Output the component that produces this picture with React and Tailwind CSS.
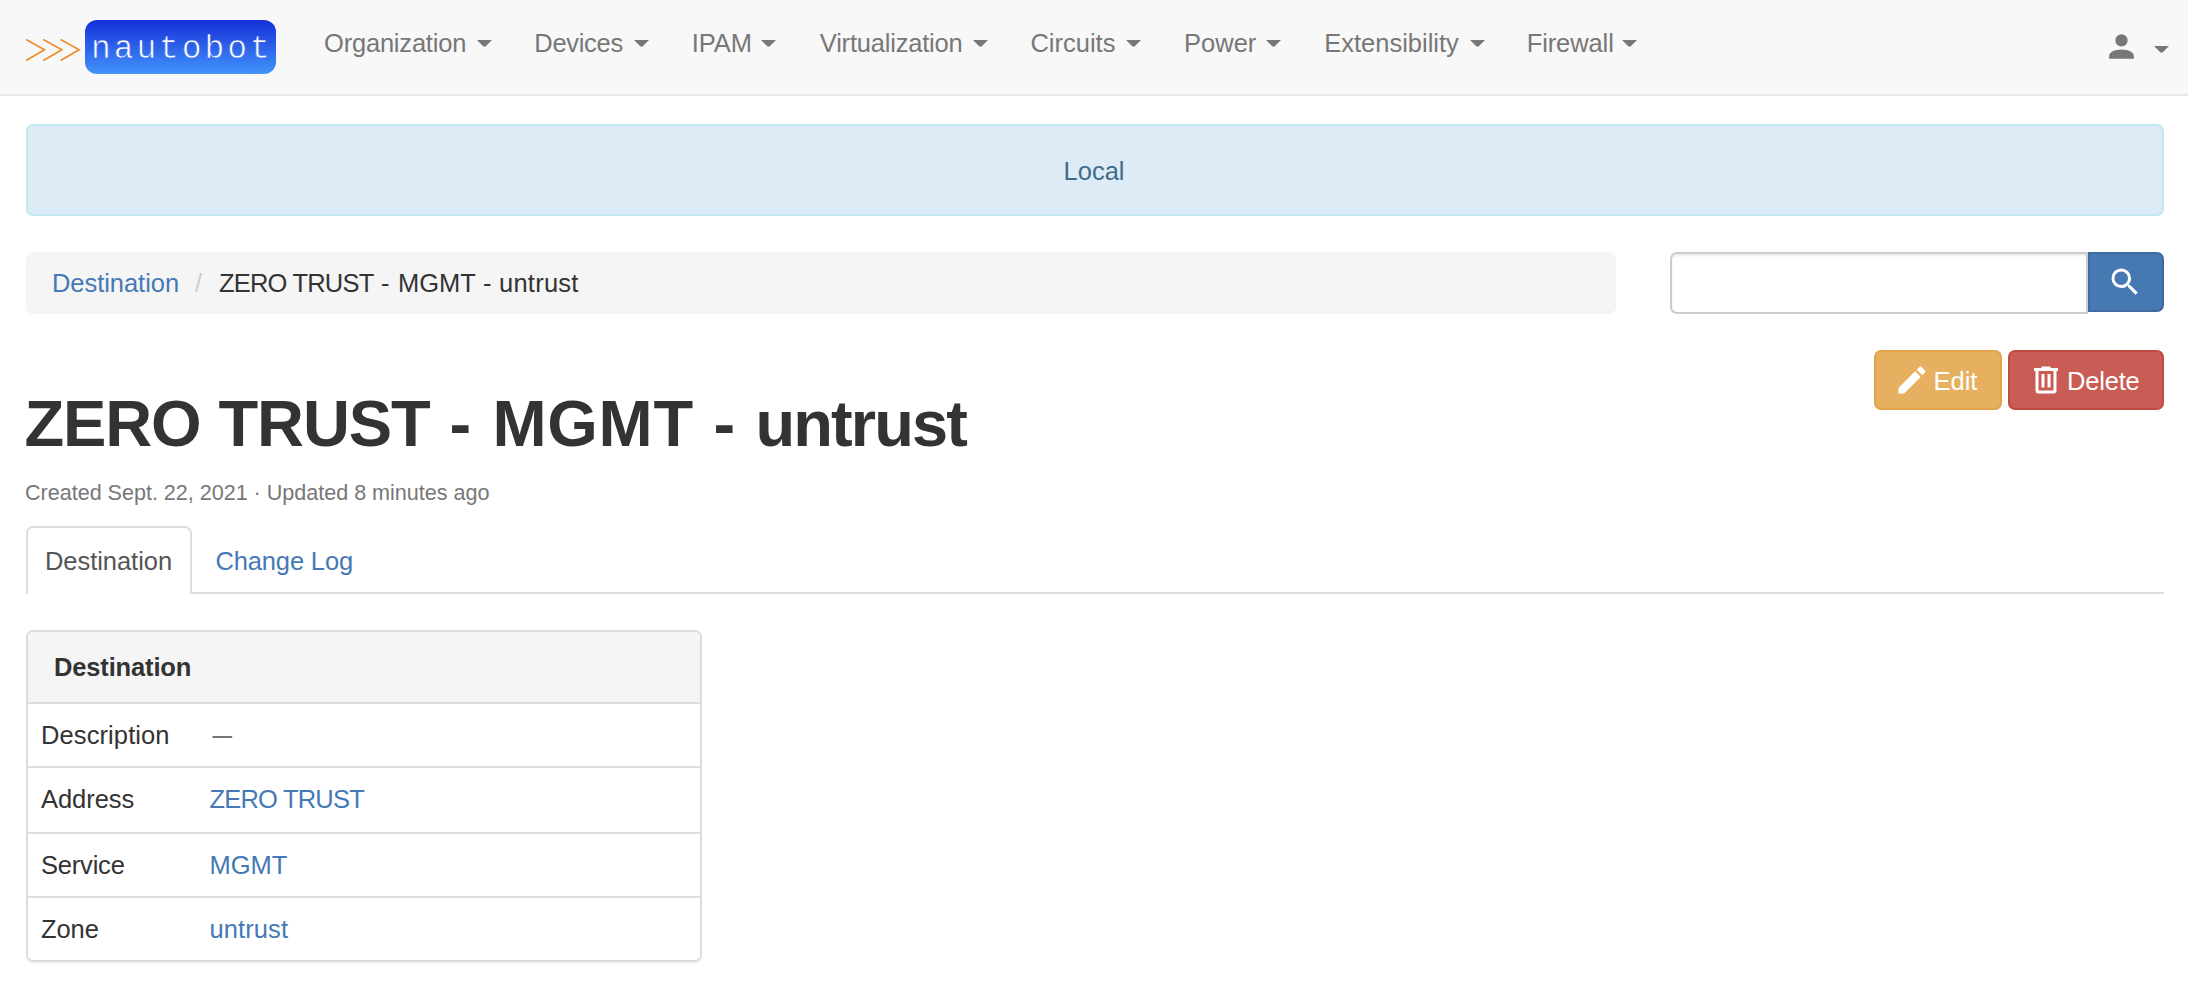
const NAV = [
  { label: 'Organization', width: 'w-[210.3px]', text: 'w-[152.7px] tracking-[-0.2px]' },
  { label: 'Devices', width: 'w-[157.5px]', text: 'w-[99.5px] tracking-[-0.3px]' },
  { label: 'IPAM', width: 'w-[128px]', text: 'w-[69.5px] tracking-[-0.1px]' },
  { label: 'Virtualization', width: 'w-[210.6px]', text: 'w-[153.7px] tracking-[-0.2px]' },
  { label: 'Circuits', width: 'w-[153.7px]', text: 'w-[95.6px] tracking-[0px]' },
  { label: 'Power', width: 'w-[140.1px]', text: 'w-[82px] tracking-[0px]' },
  { label: 'Extensibility', width: 'w-[202.5px]', text: 'w-[146px] tracking-[0px]' },
  { label: 'Firewall', width: 'w-[120px]', text: 'w-[95.6px] tracking-[-0.1px]' },
];

const ICONS = {
  account:
    'M12,4A4,4 0 0,1 16,8A4,4 0 0,1 12,12A4,4 0 0,1 8,8A4,4 0 0,1 12,4M12,14C16.42,14 20,15.79 20,18V20H4V18C4,15.79 7.58,14 12,14Z',
  magnify:
    'M9.5,3A6.5,6.5 0 0,1 16,9.5C16,11.11 15.41,12.59 14.44,13.73L14.71,14H15.5L20.5,19L19,20.5L14,15.5V14.71L13.73,14.44C12.59,15.41 11.11,16 9.5,16A6.5,6.5 0 0,1 3,9.5A6.5,6.5 0 0,1 9.5,3M9.5,5C7,5 5,7 5,9.5C5,12 7,14 9.5,14C12,14 14,12 14,9.5C14,7 12,5 9.5,5Z',
  pencil:
    'M20.71,7.04C21.1,6.65 21.1,6 20.71,5.63L18.37,3.29C18,2.9 17.35,2.9 16.96,3.29L15.12,5.12L18.87,8.87M3,17.25V21H6.75L17.81,9.93L14.06,6.18L3,17.25Z',
  trash:
    'M9,3V4H4V6H5V19A2,2 0 0,0 7,21H17A2,2 0 0,0 19,19V6H20V4H15V3H9M7,6H17V19H7V6M9,8V17H11V8H9M13,8V17H15V8H13Z',
};

function Icon({ name, className }) {
  return (
    <svg viewBox="0 0 24 24" fill="currentColor" className={className} aria-hidden="true">
      <path d={ICONS[name]} />
    </svg>
  );
}

function Caret() {
  return (
    <svg width="15" height="7" viewBox="0 0 15 7" fill="currentColor" aria-hidden="true">
      <path d="M0 0H15L8.5 6.5H6.5Z" />
    </svg>
  );
}

function Logo() {
  return (
    <svg width="250" height="54" viewBox="0 0 250 54" role="img" aria-label="nautobot">
      <defs>
        <linearGradient id="badge" gradientUnits="userSpaceOnUse" x1="0" y1="0" x2="0" y2="54">
          <stop offset="0" stopColor="#162fd8" />
          <stop offset="1" stopColor="#4294fb" />
        </linearGradient>
      </defs>
      <g fill="none" stroke="#ef8c2c" strokeWidth="1.7">
        <path d="M0 19.5L18.5 29.7L0 40.5" />
        <path d="M17.3 19.5L35.8 29.7L17.3 40.5" />
        <path d="M34.6 19.5L53.1 29.7L34.6 40.5" />
      </g>
      <rect x="59" y="0" width="191" height="54" rx="12" fill="url(#badge)" />
      <text
        x="65"
        y="38.2"
        fill="#fff"
        stroke="url(#badge)"
        strokeWidth="0.7"
        fontSize="33"
        letterSpacing="2.9"
        className="font-['Courier_New','Liberation_Mono',monospace]"
      >
        nautobot
      </text>
    </svg>
  );
}

function Row({ label, children, className, labelClass }) {
  return (
    <div className={`flex items-center border-t-2 border-[#dddddd] pl-[13px] ${className}`}>
      <div className={`w-[168.5px] ${labelClass}`}>{label}</div>
      {children}
    </div>
  );
}

export default function App() {
  return (
    <div className="min-h-[988px] bg-white font-['Liberation_Sans',Arial,sans-serif] text-[25.5px] leading-9 text-[#333333]">
      <nav className="flex h-24 items-start border-b-2 border-[#e7e7e7] bg-[#f8f8f8] pl-[26px] text-[#777777]">
        <div className="w-[298px] shrink-0 pt-5">
          <Logo />
        </div>
        {NAV.map((item) => (
          <a key={item.label} className={`flex shrink-0 items-center pt-[25px] ${item.width}`}>
            <span className={`shrink-0 ${item.text}`}>{item.label}</span>
            <Caret />
          </a>
        ))}
        <a className="mr-[19px] ml-auto flex items-start gap-3.5 pt-7">
          <Icon name="account" className="size-[37px]" />
          <span className="flex pt-[18px]">
            <Caret />
          </span>
        </a>
      </nav>

      <main className="pt-7 pr-6 pl-[26px]">
        <div className="flex h-[92px] items-center justify-center rounded-[7px] border-2 border-[#c2e7f0] bg-[#ddebf6] pt-0.5 pr-0.5 text-[#3f6c8b]">
          Local
        </div>

        <div className="mt-9 flex items-start justify-between">
          <div className="flex h-[62px] w-[1590px] items-center rounded-[7px] bg-[#f5f5f5] pl-[26px]">
            <a className="w-[142px] tracking-[-0.05px] text-[#4579b5]">Destination</a>
            <span className="w-[25px] pl-px text-[#cccccc]">/</span>
            <span className="flex whitespace-pre">
              <span className="w-[162px] tracking-[-0.8px]">ZERO TRUST </span>
              <span className="w-[17px]">- </span>
              <span className="w-[85px]">MGMT </span>
              <span className="w-4">- </span>
              <span className="tracking-[0.25px]">untrust</span>
            </span>
          </div>
          <div className="flex items-start">
            <input
              aria-label="Search"
              className="h-[62px] w-[418px] rounded-l-[7px] border-2 border-[#cccccc] bg-white px-5 shadow-[inset_0_2px_2px_rgba(0,0,0,0.075)]"
            />
            <button
              aria-label="Submit search"
              className="flex h-[60px] w-[76px] items-center rounded-r-[7px] border-2 border-[#3f6ba1] bg-[#4678b2] pl-[17px] text-white"
            >
              <Icon name="magnify" className="size-9" />
            </button>
          </div>
        </div>

        <div className="mt-9 flex items-start justify-between">
          <div>
            <h1 className="mt-[37px] -ml-[1.5px] flex text-[65px] leading-[74px] font-bold whitespace-pre">
              <span className="w-[194px] tracking-[-1.2px]">ZERO </span>
              <span className="w-[231px] tracking-[-1.1px]">TRUST </span>
              <span className="w-[43px]">- </span>
              <span className="w-[221px] tracking-[0.7px]">MGMT </span>
              <span className="w-[42px]">- </span>
              <span className="tracking-[-1.9px]">untrust</span>
            </h1>
            <p className="mt-[14px] -ml-px text-[21.6px] leading-9 tracking-[-0.03px] text-[#777777]">
              Created Sept. 22, 2021 · Updated 8 minutes ago
            </p>
          </div>
          <div className="flex gap-1.5 text-white">
            <button className="flex h-[60px] w-32 items-center gap-1 rounded-[7px] border-2 border-[#e3a54b] bg-[#e6b060] pl-[17.5px]">
              <Icon name="pencil" className="size-9 shrink-0" />
              <span className="pt-0.5">Edit</span>
            </button>
            <button className="flex h-[60px] w-[156px] items-center gap-[3px] rounded-[7px] border-2 border-[#c34a42] bg-[#c95c54] pl-[18px]">
              <Icon name="trash" className="size-9 shrink-0" />
              <span className="pt-0.5 tracking-[-0.2px]">Delete</span>
            </button>
          </div>
        </div>

        <div className="mt-[15px] flex h-[68px]">
          <div className="flex w-[166px] items-center rounded-t-[7px] border-2 border-b-0 border-[#dddddd] pl-[17px] tracking-[-0.05px] text-[#555555]">
            Destination
          </div>
          <div className="flex flex-1 items-center border-b-2 border-[#dddddd] pt-[3px] pl-[23.5px] tracking-[-0.15px] text-[#4579b5]">
            Change Log
          </div>
        </div>

        <section className="mt-9 w-[676px] overflow-hidden rounded-[7px] border-2 border-[#dddddd] shadow-[0_2px_2px_rgba(0,0,0,0.05)]">
          <div className="flex h-[70px] items-center bg-[#f5f5f5] pl-[26px] font-bold tracking-[-0.15px]">Destination</div>
          <Row label="Description" className="h-16" labelClass="tracking-[0.1px]">
            <span className="pl-[3px] text-[19.5px] font-bold text-[#777777]">—</span>
          </Row>
          <Row label="Address" className="h-[66px] pb-0.5" labelClass="tracking-[-0.05px]">
            <a className="tracking-[-0.8px] text-[#4579b5]">ZERO TRUST</a>
          </Row>
          <Row label="Service" className="h-16" labelClass="tracking-[-0.2px]">
            <a className="text-[#4579b5]">MGMT</a>
          </Row>
          <Row label="Zone" className="h-16" labelClass="tracking-[-0.1px]">
            <a className="tracking-[0.1px] text-[#4579b5]">untrust</a>
          </Row>
        </section>
      </main>
    </div>
  );
}
